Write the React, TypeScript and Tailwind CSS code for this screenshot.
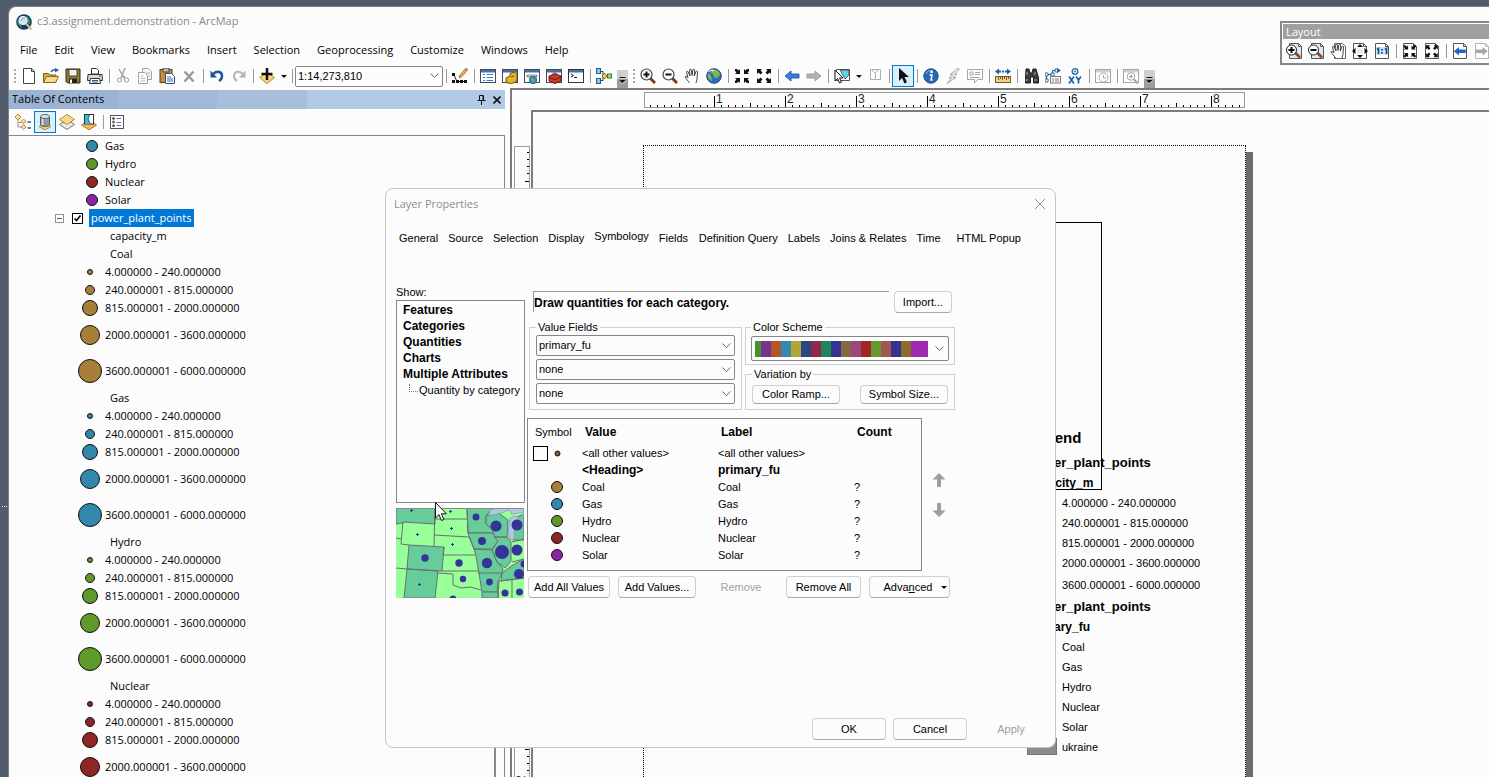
import React, { type ReactNode } from "react";

/* ---------- icon primitives ---------- */

function Icon({ children, size = 16 }: { children: ReactNode; size?: number }) {
  return (
    <svg width={size} height={size} viewBox="0 0 16 16" fill="none" className="shrink-0" aria-hidden="true">
      {children}
    </svg>
  );
}

const PageBase = ({ stroke = "#555555" }: { stroke?: string }) => (
  <path d="M1.500 .5h10l3 3v12h-13z M11.500 .5v3h3" fill="#fff" stroke={stroke} />
);

const WindowBase = ({ bar = "#4a6fa5", stroke = "#3f4a5c" }: { bar?: string; stroke?: string }) => (
  <>
    <rect x=".5" y="1.500" width="15" height="13" fill="#fff" stroke={stroke} />
    <rect x="1" y="2" width="14" height="2.500" fill={bar} />
  </>
);

const inward = "M1 1l2 0 1.500 1.500L6 1v5H1l1.500-1.500L1 3z M15 1v2l-1.500 1.500L15 6h-5V1l1.500 1.500L13 1z M1 15v-2l1.500-1.500L1 10h5v5l-1.500-1.500L3 15z M15 15h-2l-1.500-1.500L10 15v-5h5l-1.500 1.500L15 13z";
const outward = "M1 1h5L4.500 2.500l2 2-2 2-2-2L1 6z M15 1v5l-1.500-1.500-2 2-2-2 2-2L10 1z M1 15v-5l1.500 1.500 2-2 2 2-2 2L6 15z M15 15h-5l1.500-1.500-2-2 2-2 2 2L15 10z";
const leftArrow = "M1 8l6-5v3h8v4H7v3z";
const rightArrow = "M15 8L9 3v3H1v4h8v3z";
const handPath =
  "M5.500 15c-1-2-3.500-4-4.500-6 .5-1 1.500-.8 3 .8L2.500 4c.2-1 1.400-1 1.800 0L6 8 5.500 2c.3-1.200 1.600-1 1.900 0L8 7.500 8.800 1.800c.4-1 1.600-.8 1.800.2l-.3 6L12 3.500c.5-.9 1.600-.5 1.600.5L13 11l-1 4";

const NewIcon = () => (
  <Icon>
    <path d="M2.500 .5h8l3 3v12h-11z M10.500 .5v3h3" fill="#fff" stroke="#444" />
  </Icon>
);
const OpenIcon = () => (
  <Icon>
    <path d="M.5 14.500v-9h5l1.500 1.500h6v7.500z" fill="#d7ab45" stroke="#7a5c1b" />
    <path d="M.5 14.500l3-6h12l-3 6z" fill="#f7dc8e" stroke="#8b6b21" />
    <path d="M8 4c1-2 3-2.500 5-2" stroke="#1c5fa8" strokeWidth="1.500" />
    <path d="M12 0l4 2-4 2.500z" fill="#1c5fa8" />
  </Icon>
);
const SaveIcon = () => (
  <Icon>
    <path d="M1 1h14v14H2.500L1 13.500z" fill="#8a7a35" stroke="#2d2a1c" />
    <path d="M4 1.500h8V8H4z" fill="#f1f1f1" stroke="#4a4630" />
    <path d="M4 10.500h8V15H4z" fill="#222" />
    <path d="M5 11.500h2V15H5z" fill="#fff" />
  </Icon>
);
const PrintIcon = () => (
  <Icon>
    <path d="M4.500 6V.5h5l2 2V6z" fill="#fff" stroke="#333" />
    <path d="M1 6.500h14l.5 6H.5z" fill="#d9d9d2" stroke="#333" />
    <path d="M3.500 10.500h9l1 5h-11z" fill="#fff" stroke="#333" />
    <path d="M5 12.500h6 M5 14h6" stroke="#2b5a98" />
    <rect x="12" y="7.500" width="1.500" height="1.500" fill="#d33" />
  </Icon>
);
const CutIcon = () => (
  <Icon>
    <path d="M4 1l5 9 M10 0L6 10" stroke="#a5a5a5" strokeWidth="1.500" />
    <circle cx="4.500" cy="12" r="2" stroke="#9b9b9b" />
    <circle cx="11.500" cy="12" r="2.200" stroke="#9b9b9b" />
    <path d="M8 8l2 2" stroke="#a5a5a5" strokeWidth="2" />
  </Icon>
);
const CopyIcon = () => (
  <Icon>
    <path d="M5.500 .5h6l3 3v8h-9z" fill="#f4f4f4" stroke="#a2a2a2" />
    <path d="M1.500 4.500h6l3 3v8h-9z" fill="#fff" stroke="#a2a2a2" />
    <path d="M3.500 8h3 M3.500 10.500h5 M3.500 13h5 M9 5h4 M11 8h2" stroke="#b5b5b5" />
  </Icon>
);
const PasteIcon = () => (
  <Icon>
    <rect x="1" y="1.500" width="12" height="13" fill="#c98d3c" stroke="#5a4220" />
    <path d="M4 0h6v4H4z" fill="#bbb" stroke="#444" />
    <path d="M6.500 5.500h6l3 3v7h-9z" fill="#fff" stroke="#35507d" />
    <path d="M8 9h4 M8 11h6 M8 13h6" stroke="#3a6fb5" />
  </Icon>
);
const DeleteIcon = () => (
  <Icon>
    <path d="M3.500 3.500l9 10 M12.500 3.500l-9 10" stroke="#999" strokeWidth="2.500" />
  </Icon>
);
const UndoIcon = () => (
  <Icon>
    <path d="M4 6c5-4 9-2 9 2 0 2-1 4-3 5" stroke="#1d5499" strokeWidth="2.500" />
    <path d="M1.500 2.500v7h6.500z" fill="#1d5499" />
  </Icon>
);
const RedoIcon = () => (
  <Icon>
    <path d="M12 6C7 2 3 4 3 8c0 2 1 4 3 5" stroke="#b4b4b4" strokeWidth="2" />
    <path d="M14.500 2.500v7H8z" fill="#b4b4b4" />
  </Icon>
);
const AddDataIcon = () => (
  <Icon>
    <path d="M8 4.500l7.500 5L8 15.500.5 9.500z" fill="#f6d77d" stroke="#b38a35" />
    <path d="M8 0v12 M2.500 6h11" stroke="#111" strokeWidth="2.500" />
  </Icon>
);
const EditorIcon = () => (
  <Icon>
    <path d="M1.500 6L5 13.500h9" stroke="#222" />
    <path d="M0 5h3v3H0z M0 12h3v3H0z M4 12h3v3H4z M8 12h3v3H8z M12 12h3v3h-3z" fill="#111" />
    <path d="M7 10l1-3 5.500-6.500L15.500 2 10 8.500z" fill="#e8b23e" stroke="#7e5b1c" strokeWidth=".7" />
    <path d="M13 1l1-1 2 1.500-1 1z" fill="#d9534f" />
  </Icon>
);
const TableWinIcon = () => (
  <Icon>
    <WindowBase />
    <path d="M3 6.500h2 M3 9.500h2 M3 12.500h2 M6.500 6.500H13 M6.500 9.500H13 M6.500 12.500H13" stroke="#2d7dc8" />
  </Icon>
);
const CatalogIcon = () => (
  <Icon>
    <WindowBase />
    <path d="M4 14V10l4-2V5.500l4-1.500 3 1.500V13l-6 3z" fill="#e6b422" stroke="#6f5511" />
    <path d="M9 9l3-1" stroke="#6f5511" />
  </Icon>
);
const SearchWinIcon = () => (
  <Icon>
    <WindowBase />
    <path d="M3 7h10v2H3z" fill="#d9d9d9" stroke="#666" strokeWidth=".7" />
    <circle cx="9" cy="12" r="3.700" fill="#3b8ccc" stroke="#2b5d7f" strokeWidth=".8" />
    <path d="M7 11c2-2 3 0 4 1l-2 3z" fill="#6cb04c" />
  </Icon>
);
const ToolboxIcon = () => (
  <Icon>
    <WindowBase />
    <path d="M3 8l7-2 5 2v5l-6 2.500L3 13z" fill="#cf3a2b" stroke="#701a12" />
    <path d="M3 9.500l6 2 6-2.500 M6 7c0-2 4-3 5-.5" stroke="#701a12" />
  </Icon>
);
const PythonIcon = () => (
  <Icon>
    <WindowBase stroke="#333" />
    <path d="M3 6l2.500 1.500L3 9" stroke="#111" />
    <path d="M6 9.500h3" stroke="#111" />
  </Icon>
);
const ModelIcon = () => (
  <Icon>
    <path d="M5 3.500h2v9H5 M7 8h4" stroke="#333" />
    <rect x=".5" y=".5" width="4" height="5" fill="#8ec5f2" stroke="#205c9c" />
    <rect x=".5" y="10.500" width="4" height="5" fill="#8ec5f2" stroke="#205c9c" />
    <path d="M6 8l2.500-3L11 8l-2.500 3z" fill="#f5cf56" stroke="#93701a" />
    <rect x="11.500" y="6" width="4" height="4" fill="#a5d87b" stroke="#3d7a22" />
  </Icon>
);
const ZoomGlass = ({ minus = false }: { minus?: boolean }) => (
  <Icon>
    <path d="M10 10l5 5" stroke="#7b3f20" strokeWidth="3" />
    <circle cx="6.500" cy="6.500" r="5.500" fill="#fff" stroke="#444" strokeWidth="1.200" />
    <path d={minus ? "M3.500 6.500h6" : "M3.500 6.500h6 M6.500 3.500v6"} stroke="#111" strokeWidth="2" />
  </Icon>
);
const HandIcon = () => (
  <Icon>
    <path d={handPath} fill="#fff" stroke="#333" strokeWidth=".9" />
  </Icon>
);
const GlobeIcon = () => (
  <Icon>
    <circle cx="8" cy="8" r="7.300" fill="#2f6fc0" stroke="#24446e" />
    <path d="M7 2c4-1 7 2 7 5l-3 3-3-1-1-3-2-1z M2 5l3 3 1 5C3 12 1 9 2 5z" fill="#7fb84a" />
    <path d="M3 4c1-2 4-2 5-1" stroke="#d4e8fb" strokeWidth="1.500" />
  </Icon>
);
const ArrowsInIcon = () => (
  <Icon>
    <path d={inward} fill="#111" />
  </Icon>
);
const ArrowsOutIcon = () => (
  <Icon>
    <path d={outward} fill="#111" />
  </Icon>
);
const BackIcon = () => (
  <Icon>
    <path d={leftArrow} fill="#3b7dd8" stroke="#1b4a92" strokeWidth=".8" />
  </Icon>
);
const ForwardIcon = () => (
  <Icon>
    <path d={rightArrow} fill="#b3b3b3" stroke="#8f8f8f" strokeWidth=".8" />
  </Icon>
);
const SelectFeatIcon = () => (
  <Icon>
    <path d="M2.500 1.500h13v11h-13z" fill="#fff" stroke="#555" />
    <path d="M6 2h9v5l-4 4z" fill="#58d3ee" stroke="#333" strokeWidth=".7" />
    <path d="M1 2v11l2.500-2.500L5.500 15l2-1-2-4H9z" fill="#fff" stroke="#111" />
  </Icon>
);
const ClearSelIcon = () => (
  <Icon>
    <path d="M3.500 1.500h10v10h-10z M5 2l3 3 3-3 M8.500 5v6" stroke="#b0b0b0" />
  </Icon>
);
const PointerIcon = () => (
  <Icon>
    <path d="M4 0v13l3-3 2.500 5.500 2.500-1.200L9.500 9H14z" fill="#111" />
  </Icon>
);
const InfoIcon = () => (
  <Icon>
    <circle cx="8" cy="8" r="7.200" fill="#2468b8" stroke="#174a88" />
    <path d="M3 6c1-3 4-4 7-3" stroke="#8fbbe8" />
    <circle cx="8.500" cy="4" r="1.300" fill="#fff" />
    <path d="M6.500 7h2.500l-1 5h1.500" stroke="#fff" strokeWidth="1.500" />
  </Icon>
);
const LightningIcon = () => (
  <Icon>
    <path d="M12.500 .5L5 6.500h3L4 10h2.500L2 15.500l9-6H8L12 6H9.500l5-5z" fill="#eee" stroke="#aaa" />
  </Icon>
);
const PopupIcon = () => (
  <Icon>
    <path d="M.5 1.500h15v10h-5l-3 3.500v-3.500h-7z" fill="#fff" stroke="#a5a5a5" />
    <path d="M3 4h3v3H3z M8 4.500h5 M8 6.500h5 M3 9.500H13" stroke="#a5a5a5" />
  </Icon>
);
const MeasureIcon = () => (
  <Icon>
    <path d="M0 3.500l4-3v2h2v2H4v2z M16 3.500l-4-3v2h-2v2h2v2z M7 2.500h2v2H7z" fill="#1f5fb0" />
    <rect x=".5" y="8.500" width="15" height="6" fill="#efd28a" stroke="#7a5a22" />
    <path d="M3.500 9v3 M5.500 9v2 M7.500 9v3 M9.500 9v2 M11.500 9v3 M13.500 9v2" stroke="#7a5a22" />
  </Icon>
);
const BinocularsIcon = () => (
  <Icon>
    <path d="M3 1h3l1 4h2l1-4h3l2.500 9v5h-5V9h-3v6h-5v-5z" fill="#3a3d40" stroke="#1e1e1e" />
    <path d="M2 12h3 M11 12h3 M4 4v3 M12 4v3" stroke="#a5abb0" />
  </Icon>
);
const RouteIcon = () => (
  <Icon>
    <path d="M1.500 13V6.500h6V2.500h4" stroke="#1f5fa0" />
    <path d="M0 11h3v3H0z M0 5h3v3H0z M6 5h3v3H6z M10 1h3v3h-3z" fill="#fff" stroke="#1f5fa0" strokeWidth=".9" />
    <path d="M12 0l4 2.500L12 5z" fill="#1f5fa0" />
    <rect x="5.500" y="8.500" width="10" height="6.500" fill="#fff" stroke="#777" />
    <path d="M7 11h2 M10 11h4 M7 13h2 M10 13h4" stroke="#777" />
  </Icon>
);
const XYIcon = () => (
  <Icon>
    <circle cx="8" cy="3.500" r="2.800" stroke="#1d64a8" strokeWidth="1.300" />
    <circle cx="8" cy="3.500" r="1" fill="#1d64a8" />
    <path d="M2 8.500l5 7 M7 8.500l-5 7 M9 8.500l2.500 3.500L14 8.500 M11.500 12v3.500" stroke="#1d64a8" strokeWidth="1.700" />
  </Icon>
);
const TimeIcon = () => (
  <Icon>
    <WindowBase bar="#cfcfcf" stroke="#a5a5a5" />
    <circle cx="8.500" cy="9.500" r="4.500" fill="#fff" stroke="#a5a5a5" />
    <path d="M8.500 7v3h2.500" stroke="#a5a5a5" />
  </Icon>
);
const ViewerIcon = () => (
  <Icon>
    <WindowBase bar="#cfcfcf" stroke="#a5a5a5" />
    <circle cx="8" cy="8.500" r="3.800" fill="#fff" stroke="#a5a5a5" />
    <path d="M6 8.500h4 M8 6.500v4" stroke="#999" />
    <path d="M11 11.500l4 4" stroke="#a5a5a5" strokeWidth="2" />
  </Icon>
);

const PageZoomIcon = ({ minus = false }: { minus?: boolean }) => (
  <Icon>
    <path d="M3.500 .5h9l3 3v12h-12z M12.500 .5v3h3" fill="#dcebf8" stroke="#555" />
    <path d="M9 9.500l5 5" stroke="#8a4a28" strokeWidth="2.800" />
    <circle cx="5.500" cy="7" r="5" fill="#fff" stroke="#222" />
    <path d={minus ? "M2.500 7h6" : "M2.500 7h6 M5.500 4v6"} stroke="#111" strokeWidth="2" />
  </Icon>
);
const PageHandIcon = () => (
  <Icon>
    <path d="M4.500 .5h8l3 3v12h-11z" fill="#fff" stroke="#666" />
    <path d={handPath} fill="#fff" stroke="#333" strokeWidth=".9" />
  </Icon>
);
const PageFullIcon = () => (
  <Icon>
    <PageBase />
    <rect x="5" y="5.500" width="6" height="5" fill="#dcebf8" />
    <path d="M8 1l3 3H5z M8 15l3-3H5z M0 8l3.500-3v6z M16 8l-3.500-3v6z" fill="#111" />
  </Icon>
);
const PageOneIcon = () => (
  <Icon>
    <PageBase />
    <rect x="2" y="4" width="12" height="8" fill="#cfe4f6" />
    <path d="M3 6.500l1.500-1V11 M11 6.500l1.500-1V11" stroke="#18508c" strokeWidth="1.700" />
    <path d="M7 6h2v1.500H7z M7 9h2v1.500H7z" fill="#18508c" />
  </Icon>
);
const PageArrows = ({ d, fill = "#111", stroke }: { d: string; fill?: string; stroke?: string }) => (
  <Icon>
    <PageBase stroke={stroke} />
    <path d={d} fill={fill} transform="translate(1 1.500) scale(.85)" />
  </Icon>
);

const AppLogo = () => (
  <Icon>
    <circle cx="8" cy="8" r="7.800" fill="#173d66" />
    <path d="M10 2c3 1 5 4 4 8l-3-1-2-4z M1 7l3 2 2 5C3 13 1 10 1 7z" fill="#2f8f6b" />
    <circle cx="7" cy="6.500" r="4" fill="#cfe6f7" stroke="#eaf3fa" strokeWidth="1.200" />
    <path d="M5 7c1-3 3-3 4-2" stroke="#5b9bd0" />
    <path d="M10 9.500l5.500 6" stroke="#d9b98a" strokeWidth="2" />
  </Icon>
);

/* table-of-contents icons */
const DrawOrderIcon = () => (
  <Icon>
    <path d="M3 5v8h4 M3 8.500h4" stroke="#999" />
    <path d="M3 0l3 3-3 3-3-3z M8.500 5l2.500 2.500L8.500 10 6 7.500z M8.500 10.500L11 13l-2.500 2.500L6 13z" fill="#f8dc98" stroke="#c08c3c" />
    <path d="M12.500 8H16 M12.500 14H16" stroke="#2e5da0" strokeWidth="1.500" />
  </Icon>
);
const SourceIcon = () => (
  <Icon>
    <path d="M8 9l6 3.500L8 16l-6-3.500z" fill="#f6cf6b" stroke="#b38a35" />
    <path d="M3.500 2.500v8c0 2.500 9 2.500 9 0v-8z" fill="#8f9aa8" stroke="#4f5864" />
    <ellipse cx="8" cy="2.500" rx="4.500" ry="2" fill="#dfe5eb" stroke="#5f6874" />
    <path d="M5.500 5v6" stroke="#e7ecf1" strokeWidth="1.500" />
  </Icon>
);
const VisibilityIcon = () => (
  <Icon>
    <path d="M8 5.500l7.500 5L8 15.500.5 10.500z" fill="#e7e7e7" stroke="#777" />
    <path d="M8 .5l7.500 5L8 10.500.5 5.500z" fill="#f9d88a" stroke="#b38a35" />
  </Icon>
);
const BySelectionIcon = () => (
  <Icon>
    <path d="M8 6.500l7.500 4.500L8 15.800.5 11z" fill="#f6b95a" stroke="#b0772a" />
    <rect x="3.500" y=".5" width="9" height="9.500" fill="#fff" stroke="#333" />
    <path d="M4 1h4.500L7 5l2 4.500H4z" fill="#26c3de" />
    <path d="M8.500 1L7 5l2 4.500" stroke="#333" strokeWidth=".8" />
  </Icon>
);
const OptionsIcon = () => (
  <Icon>
    <rect x="1.500" y="1.500" width="13" height="13" fill="#fff" stroke="#555" />
    <circle cx="4.500" cy="4.500" r="1.200" fill="#333" />
    <circle cx="4.500" cy="8" r="1" stroke="#333" />
    <circle cx="4.500" cy="11.700" r="1.200" fill="#333" />
    <path d="M7.500 4.500H12 M7.500 8.500H12 M7.500 11.500H12" stroke="#5574a8" />
  </Icon>
);

const Chevron = () => (
  <svg width="9" height="6" viewBox="0 0 9 6" fill="none" className="pointer-events-none shrink-0" aria-hidden="true">
    <path d="M.5 .5l4 4 4-4" stroke="#666" />
  </svg>
);

/* ---------- toolbars ---------- */

function ToolButton({ label, active = false, children }: { label: string; active?: boolean; children: ReactNode }) {
  return (
    <button
      type="button"
      aria-label={label}
      className={
        active
          ? "flex h-[22px] w-[22px] shrink-0 items-center justify-center border border-[#0078d7] bg-[#d9f1fb]"
          : "flex h-[22px] w-[22px] shrink-0 items-center justify-center"
      }
    >
      {children}
    </button>
  );
}

const Sep = () => (
  <span className="flex w-[6px] shrink-0 justify-center">
    <span className="h-[14px] w-px bg-[#9a9a9a]" />
  </span>
);

const Grip = () => (
  <span className="flex w-1 shrink-0 flex-col gap-[2px]">
    {[0, 1, 2, 3].map((i) => (
      <span key={i} className="h-[2px] w-[2px] bg-[#aaaaaa]" />
    ))}
  </span>
);

const DropArrow = ({ label }: { label: string }) => (
  <button type="button" aria-label={label} className="flex h-[22px] w-[11px] shrink-0 items-center justify-center">
    <svg width="6" height="3" viewBox="0 0 6 3" aria-hidden="true">
      <path d="M0 0h6L3 3z" fill="#111" />
    </svg>
  </button>
);

const Overflow = () => (
  <button
    type="button"
    aria-label="Toolbar options"
    className="ml-[2px] flex h-[18px] w-[11px] shrink-0 flex-col justify-end self-end bg-linear-to-b from-[#cfcfcf] from-50% to-[#9c9c9c] to-50% pb-1"
  >
    <svg width="11" height="7" viewBox="0 0 11 7" aria-hidden="true">
      <path d="M2.500 .5h6" stroke="#111" />
      <path d="M2.500 3h6l-3 3.500z" fill="#111" />
      <path d="M3 7.500L9 4" stroke="#fff" strokeWidth=".6" />
    </svg>
  </button>
);

const menus = ["File", "Edit", "View", "Bookmarks", "Insert", "Selection", "Geoprocessing", "Customize", "Windows", "Help"];

function MainToolbar() {
  return (
    <div role="toolbar" aria-label="Standard and tools" className="flex h-6 shrink-0 items-center pl-[5px]">
      <Grip />
      <ToolButton label="New"><NewIcon /></ToolButton>
      <ToolButton label="Open"><OpenIcon /></ToolButton>
      <ToolButton label="Save"><SaveIcon /></ToolButton>
      <ToolButton label="Print"><PrintIcon /></ToolButton>
      <Sep />
      <ToolButton label="Cut"><CutIcon /></ToolButton>
      <ToolButton label="Copy"><CopyIcon /></ToolButton>
      <ToolButton label="Paste"><PasteIcon /></ToolButton>
      <ToolButton label="Delete"><DeleteIcon /></ToolButton>
      <Sep />
      <ToolButton label="Undo"><UndoIcon /></ToolButton>
      <ToolButton label="Redo"><RedoIcon /></ToolButton>
      <Sep />
      <ToolButton label="Add data"><AddDataIcon /></ToolButton>
      <DropArrow label="Add data menu" />
      <Sep />
      <div className="relative flex w-[148px] shrink-0 items-center">
        <select
          aria-label="Map scale"
          className="h-[21px] w-full appearance-none rounded-xs border border-[#868686] bg-[#fcfcfc] pl-[2px] font-['Liberation_Sans',sans-serif] text-[11px] text-black"
        >
          <option>1:14,273,810</option>
        </select>
        <span className="pointer-events-none absolute right-1"><Chevron /></span>
      </div>
      <Sep />
      <ToolButton label="Editor"><EditorIcon /></ToolButton>
      <Sep />
      <ToolButton label="Contents window"><TableWinIcon /></ToolButton>
      <ToolButton label="Catalog window"><CatalogIcon /></ToolButton>
      <ToolButton label="Search window"><SearchWinIcon /></ToolButton>
      <ToolButton label="Toolbox"><ToolboxIcon /></ToolButton>
      <ToolButton label="Python window"><PythonIcon /></ToolButton>
      <Sep />
      <ToolButton label="Model builder"><ModelIcon /></ToolButton>
      <Overflow />
      <span className="w-[5px] shrink-0" />
      <Grip />
      <ToolButton label="Zoom in"><ZoomGlass /></ToolButton>
      <ToolButton label="Zoom out"><ZoomGlass minus /></ToolButton>
      <ToolButton label="Pan"><HandIcon /></ToolButton>
      <ToolButton label="Full extent"><GlobeIcon /></ToolButton>
      <Sep />
      <ToolButton label="Fixed zoom in"><ArrowsInIcon /></ToolButton>
      <ToolButton label="Fixed zoom out"><ArrowsOutIcon /></ToolButton>
      <Sep />
      <ToolButton label="Previous extent"><BackIcon /></ToolButton>
      <ToolButton label="Next extent"><ForwardIcon /></ToolButton>
      <Sep />
      <ToolButton label="Select features"><SelectFeatIcon /></ToolButton>
      <DropArrow label="Select features menu" />
      <ToolButton label="Clear selection"><ClearSelIcon /></ToolButton>
      <Sep />
      <ToolButton label="Select elements" active><PointerIcon /></ToolButton>
      <Sep />
      <ToolButton label="Identify"><InfoIcon /></ToolButton>
      <ToolButton label="Hyperlink"><LightningIcon /></ToolButton>
      <ToolButton label="Popup"><PopupIcon /></ToolButton>
      <Sep />
      <ToolButton label="Measure"><MeasureIcon /></ToolButton>
      <Sep />
      <ToolButton label="Find"><BinocularsIcon /></ToolButton>
      <ToolButton label="Find route"><RouteIcon /></ToolButton>
      <ToolButton label="Go to XY"><XYIcon /></ToolButton>
      <Sep />
      <ToolButton label="Time slider"><TimeIcon /></ToolButton>
      <Sep />
      <ToolButton label="Viewer window"><ViewerIcon /></ToolButton>
      <Overflow />
    </div>
  );
}

function LayoutToolbar() {
  return (
    <section
      aria-label="Layout toolbar"
      className="absolute top-[21px] right-0 w-[209px] overflow-hidden border-2 border-r-0 border-[#84878d] bg-[#fcfcfc] pt-px pb-px pl-px"
    >
      <h2 className="h-[15px] bg-[#a0a0a0] pl-[3px] text-[11px] leading-[15px] text-white">Layout</h2>
      <div className="mt-px flex h-[22px] items-center">
        <ToolButton label="Layout zoom in"><PageZoomIcon /></ToolButton>
        <ToolButton label="Layout zoom out"><PageZoomIcon minus /></ToolButton>
        <ToolButton label="Layout pan"><PageHandIcon /></ToolButton>
        <ToolButton label="Whole page"><PageFullIcon /></ToolButton>
        <ToolButton label="Actual size"><PageOneIcon /></ToolButton>
        <Sep />
        <ToolButton label="Layout fixed zoom in"><PageArrows d={inward} /></ToolButton>
        <ToolButton label="Layout fixed zoom out"><PageArrows d={outward} /></ToolButton>
        <Sep />
        <ToolButton label="Layout previous extent"><PageArrows d={leftArrow} fill="#2567c4" /></ToolButton>
        <ToolButton label="Layout next extent"><PageArrows d={rightArrow} fill="#a5a5a5" stroke="#b5b5b5" /></ToolButton>
      </div>
    </section>
  );
}

/* ---------- table of contents ---------- */

const fuels = [
  { name: "Coal", color: "#a87f39" },
  { name: "Gas", color: "#3288aa" },
  { name: "Hydro", color: "#5f9929" },
  { name: "Nuclear", color: "#8f2626" },
  { name: "Solar", color: "#8e22a5" },
];

const classes = [
  { label: "4.000000 - 240.000000", r: 3, tall: false },
  { label: "240.000001 - 815.000000", r: 5, tall: false },
  { label: "815.000001 - 2000.000000", r: 8, tall: false },
  { label: "2000.000001 - 3600.000000", r: 10, tall: true },
  { label: "3600.000001 - 6000.000000", r: 12, tall: true },
];

const Dot = ({ r, color }: { r: number; color: string }) => (
  <svg width="26" height="26" viewBox="-13 -13 26 26" className="shrink-0" aria-hidden="true">
    <circle r={r - 0.5} fill={color} stroke="#111" />
  </svg>
);

function TableOfContents() {
  return (
    <aside className="flex w-[496px] shrink-0 flex-col pt-[2px]">
      <header className="flex h-[19px] items-center bg-[linear-gradient(to_right,#9ab3d3_22%,#a2b8d8_22%_42%,#a7bfda_42%_60%,#b0cae5_60%)] pl-[3px]">
        <h2 className="flex-1 text-[11px] text-black">Table Of Contents</h2>
        <button type="button" aria-label="Auto hide" className="flex h-4 w-4 items-center justify-center">
          <svg width="9" height="10" viewBox="0 0 9 10" fill="none" aria-hidden="true">
            <path d="M2.500 .5h4v5h-4z M.5 5.500h8 M4.500 6v4 M6 1v4" stroke="#111" />
          </svg>
        </button>
        <button type="button" aria-label="Close table of contents" className="flex h-4 w-4 items-center justify-center">
          <svg width="8" height="8" viewBox="0 0 8 8" aria-hidden="true">
            <path d="M.5 .5l7 7 M7.500 .5l-7 7" stroke="#111" strokeWidth="1.600" />
          </svg>
        </button>
      </header>
      <div className="flex h-[26px] shrink-0 items-center pl-[3px]">
        <ToolButton label="List by drawing order"><DrawOrderIcon /></ToolButton>
        <ToolButton label="List by source" active><SourceIcon /></ToolButton>
        <ToolButton label="List by visibility"><VisibilityIcon /></ToolButton>
        <ToolButton label="List by selection"><BySelectionIcon /></ToolButton>
        <Sep />
        <ToolButton label="Options"><OptionsIcon /></ToolButton>
      </div>
      <div className="flex min-h-0 flex-1 border-t border-r border-[#868686]">
        <div className="min-h-0 flex-1 overflow-hidden pt-px text-[11px] text-black">
          <ul>
            {fuels.slice(1).map((f) => (
              <li key={f.name} className="flex h-[18px] items-center pl-[70px]">
                <Dot r={6} color={f.color} />
                {f.name}
              </li>
            ))}
          </ul>
          <div className="flex h-[18px] items-center pl-[46px]">
            <button type="button" aria-label="Collapse layer" className="flex h-[9px] w-[9px] items-center justify-center border border-[#919191]">
              <span className="h-px w-[5px] bg-[#3b5a9a]" />
            </button>
            <label className="ml-2 flex items-center gap-[6px]">
              <span className="grid h-[11px] w-[11px] place-items-center">
                <input type="checkbox" defaultChecked className="peer col-start-1 row-start-1 h-[11px] w-[11px] appearance-none border border-black bg-white" />
                <svg width="9" height="9" viewBox="0 0 9 9" fill="none" className="pointer-events-none col-start-1 row-start-1" aria-hidden="true">
                  <path d="M1.500 4.500l2 2 4-5" stroke="#000" strokeWidth="1.600" />
                </svg>
              </span>
              <span className="h-[18px] bg-[#0078d7] px-[2px] leading-[18px] text-white">power_plant_points</span>
            </label>
          </div>
          <p className="h-[18px] pl-[101px] leading-[18px]">capacity_m</p>
          {fuels.slice(0, 4).map((f) => (
            <section key={f.name}>
              <h3 className="h-[18px] pl-[101px] leading-[18px]">{f.name}</h3>
              <ul>
                {classes.map((c) => (
                  <li key={c.label} className={c.tall ? "flex h-[36px] items-center gap-[2px] pl-[68px]" : "flex h-[18px] items-center gap-[2px] pl-[68px]"}>
                    <Dot r={c.r} color={f.color} />
                    {c.label}
                  </li>
                ))}
              </ul>
            </section>
          ))}
        </div>
        <div className="flex w-[10px] shrink-0 items-end">
          <span className="h-1/2 w-[2px] bg-[#86898d]" />
        </div>
      </div>
    </aside>
  );
}

/* ---------- layout view ---------- */

const INCH = 71;

function HorizontalRuler() {
  const ticks = Array.from({ length: 84 }, (_, i) => i + 1);
  return (
    <svg width="601" height="16" viewBox="0 0 601 16" aria-label="Horizontal ruler" className="shrink-0">
      <rect x=".5" y=".5" width="600" height="15" fill="#fcfcfc" stroke="#9a9a9a" />
      {ticks.map((i) => (
        <rect key={i} x={Math.round((i * INCH) / 10) - 1} y={i % 10 === 0 ? 4 : i % 5 === 0 ? 11 : 13} width="1" height={i % 10 === 0 ? 11 : i % 5 === 0 ? 4 : 2} fill="#000" />
      ))}
      {[1, 2, 3, 4, 5, 6, 7, 8].map((n) => (
        <text key={n} x={n * INCH + 1} y="11" fontSize="12" className="font-['Liberation_Sans',sans-serif]" fill="#222">
          {n}
        </text>
      ))}
    </svg>
  );
}

function VerticalRuler() {
  const ticks = Array.from({ length: 109 }, (_, i) => i + 1);
  return (
    <svg width="17" height="782" viewBox="0 0 17 782" aria-label="Vertical ruler" className="shrink-0">
      <rect x=".5" y=".5" width="15" height="781" fill="#fcfcfc" stroke="#9a9a9a" />
      {ticks.map((i) => (
        <rect key={i} x={i % 10 === 0 ? 4 : i % 5 === 0 ? 11 : 13} y={Math.round((i * INCH) / 10) - 1} width={i % 10 === 0 ? 11 : i % 5 === 0 ? 4 : 2} height="1" fill="#000" />
      ))}
      {[1, 2, 3, 4, 5, 6, 7, 8, 9, 10].map((n) => (
        <text key={n} transform={`translate(11 ${n * INCH - 3}) rotate(-90)`} fontSize="12" className="font-['Liberation_Sans',sans-serif]" fill="#222">
          {11 - n}
        </text>
      ))}
    </svg>
  );
}

function PageLegend() {
  return (
    <div className="absolute top-[280px] left-[384px] font-['Liberation_Sans',sans-serif] text-[11px] whitespace-nowrap text-black">
      <h2 className="h-[27px] text-[15px] leading-6 font-bold">Legend</h2>
      <h3 className="h-5 text-[13px] leading-5 font-bold">power_plant_points</h3>
      <h4 className="h-5 text-[12px] leading-5 font-bold">capacity_m</h4>
      <ul className="pl-[34px] leading-5">
        {classes.slice(0, 4).map((c) => (
          <li key={c.label}>{c.label}</li>
        ))}
        <li className="leading-6">{classes[4].label}</li>
      </ul>
      <h3 className="h-5 text-[13px] leading-5 font-bold">power_plant_points</h3>
      <h4 className="h-5 text-[12px] leading-5 font-bold">primary_fu</h4>
      <ul className="pl-[34px] leading-5">
        {[...fuels.map((f) => f.name), "ukraine"].map((n) => (
          <li key={n}>{n}</li>
        ))}
      </ul>
    </div>
  );
}

function LayoutView() {
  return (
    <main className="ml-[5px] flex min-w-0 flex-1 flex-col overflow-hidden border-t-2 border-l-2 border-[#7b7b7b]">
      <div className="flex h-5 shrink-0 items-center pl-[132px]">
        <HorizontalRuler />
      </div>
      <div className="flex min-h-0 flex-1">
        <div className="w-[19px] shrink-0 overflow-hidden pt-9 pl-[2px]">
          <VerticalRuler />
        </div>
        <div className="relative flex-1 overflow-hidden border-t-2 border-l-2 border-[#7b7b7b]">
          <div className="absolute top-[33px] left-[110px] h-[782px] w-[603px] border border-dotted border-black bg-[#fcfcfc] shadow-[7px_7px_0_#6d6d6d]">
            <div className="absolute top-[76px] left-[30px] h-[268px] w-[428px] border border-black" />
            <PageLegend />
            <div className="absolute top-[592px] left-[383px] h-[17px] w-[30px] border border-[#777] bg-[#8a8c90]" />
          </div>
        </div>
      </div>
    </main>
  );
}

/* ---------- layer properties dialog ---------- */

const tabs = ["General", "Source", "Selection", "Display", "Symbology", "Fields", "Definition Query", "Labels", "Joins & Relates", "Time", "HTML Popup"];

const ramp = [
  "#41952a", "#773290", "#b2562b", "#3389ae", "#b4a337", "#2a4783", "#922849", "#24835e", "#343292",
  "#84683f", "#9b487c", "#a42529", "#639a2b", "#a0574f", "#343292", "#8b6d2b", "#9f29b0",
];

function PreviewMap() {
  const dots: [number, number, number][] = [
    [80, 9, 3.5], [100, 18, 5.5], [121, 17, 5.5], [86, 33, 4], [106, 44, 7], [121, 42, 5.5], [91, 55, 5.2],
    [29, 50, 3.7], [63, 55, 3.7], [67, 71, 3.2], [93.5, 74, 3.4], [123, 66, 5], [128, 56, 3.5], [109, 85, 3.5],
    [123.5, 84, 3.5], [57, 91, 3.5],
  ];
  const small: [number, number][] = [[15, 2], [54, 3], [55, 20], [21, 26], [56, 36], [23, 76]];
  return (
    <svg width="128" height="90" viewBox="0 0 128 90" role="img" aria-label="Preview map" className="mt-[5px] block">
      <rect width="128" height="90" fill="#99ff99" />
      <g stroke="#6b6f72" strokeWidth="1" fill="#66cc99">
        <path d="M0 0H39V16L7 14v1L0 16z" />
        <path d="M13 37l35 2-2 24-35-2z M11 61l31 2-3 27H8z" />
        <path d="M71 0H97L90 8v8l6 5 2 4H72z" />
        <path d="M72 25h25l5 8-6 8H78z M78 41l18 1 5 12 6 7-1 5H83L80 48z" />
        <path d="M83 65h23l-4 8-1 11H86z" />
        <path d="M90 8l11-4 11 8-1 17H99l-3-8-6-5z M98 29h13l4 5v19l-6 7-8-6-5-12 6-9z" />
        <path d="M118 10l10-4v26h-11z M106 65l8-6 8-5 6-3v19l-23 3z M86 84h16v6H86z" />
      </g>
      <path d="M94 2l6-2h28v4l-12 2-3-4-8 3-12 3z M114 10l5-2 4 1-4 5-1 18-4-1-2-6z M126 6l2 0v4z" fill="#b0c8e8" stroke="#7c8ca0" strokeWidth=".6" />
      <g stroke="#6b6f72" fill="none">
        <path d="M39 0L38 38 M38 11h34 M38 27l35 2 5 12 M5 36l8 1 M7 14l-2 22 M0 30l5 1 M48 39l-1 8h32 M46 63h37 M42 65l15 1v11l8 3 9-1 11 3 M0 60l11 1 M116 34l12-3 M116 54l12-3 M103 73l-1 17 M116 72v18 M103 73l25-3 M71 0l1 25" />
      </g>
      <g fill="#333399">
        {dots.map(([x, y, r]) => (
          <circle key={`${x}-${y}`} cx={x} cy={y} r={r} />
        ))}
      </g>
      <g stroke="#333399">
        {small.map(([x, y]) => (
          <path key={`${x}-${y}`} d={`M${x - 1} ${y + 0.5}h3 M${x + 0.5} ${y - 1}v3`} />
        ))}
      </g>
      <path d="M0 .5h128" stroke="#8a8a8a" />
    </svg>
  );
}

function PushButton({ children, className, disabled = false }: { children: ReactNode; className: string; disabled?: boolean }) {
  return (
    <button
      type="button"
      disabled={disabled}
      className={`flex items-center justify-center rounded border whitespace-nowrap ${disabled ? "border-transparent text-[#a0a0a0]" : "border-[#cfcfcf] border-b-[#a8a8a8] text-black"} ${className}`}
    >
      {children}
    </button>
  );
}

function FieldSelect({ label, value }: { label: string; value: string }) {
  return (
    <div className="relative flex items-center">
      <select aria-label={label} defaultValue={value} className="h-[21px] w-full appearance-none rounded-xs border border-[#868686] bg-[#fcfcfc] pl-[2px] text-[11px] text-black">
        <option>{value}</option>
      </select>
      <span className="pointer-events-none absolute right-1"><Chevron /></span>
    </div>
  );
}

function Group({ title, className, children }: { title: string; className: string; children: ReactNode }) {
  return (
    <fieldset className={`min-w-0 border border-[#cfcfcf] ${className}`}>
      <legend className="px-[2px] leading-3">{title}</legend>
      {children}
    </fieldset>
  );
}

function SymbolTable() {
  return (
    <div className="h-[153px] w-[395px] shrink-0 border border-[#868686] pt-1">
      <table className="w-full table-fixed border-collapse text-left">
        <colgroup>
          <col className="w-[54px]" />
          <col className="w-[136px]" />
          <col className="w-[136px]" />
          <col />
        </colgroup>
        <thead>
          <tr className="h-[18px]">
            <th className="pl-[7px] font-normal">Symbol</th>
            <th className="pl-[3px] text-[12px]">Value</th>
            <th className="pl-[3px] text-[12px]">Label</th>
            <th className="pl-[3px] text-[12px]">Count</th>
          </tr>
        </thead>
        <tbody>
          <tr className="h-[21px]">
            <td className="pt-1">
              <div className="flex items-center pl-[5px]">
                <input type="checkbox" aria-label="Draw all other values" className="h-[15px] w-[15px] appearance-none border border-black" />
                <svg width="19" height="9" viewBox="-9 -4 19 9" aria-hidden="true">
                  <circle cx=".5" cy=".5" r="2.500" fill="#8a5a22" stroke="#111" />
                </svg>
              </div>
            </td>
            <td className="pt-1">&lt;all other values&gt;</td>
            <td className="pt-1">&lt;all other values&gt;</td>
            <td />
          </tr>
          <tr className="h-[17px] text-[12px] leading-[17px] font-bold">
            <td />
            <td>&lt;Heading&gt;</td>
            <td>primary_fu</td>
            <td />
          </tr>
          {fuels.map((f) => (
            <tr key={f.name} className="h-[17px] leading-[17px]">
              <td>
                <svg width="13" height="13" viewBox="0 0 13 13" className="ml-[23px] block" aria-hidden="true">
                  <circle cx="6" cy="6" r="5.500" fill={f.color} stroke="#111" />
                </svg>
              </td>
              <td>{f.name}</td>
              <td>{f.name}</td>
              <td>?</td>
            </tr>
          ))}
        </tbody>
      </table>
    </div>
  );
}

function LayerProperties() {
  return (
    <section
      role="dialog"
      aria-label="Layer Properties"
      className="absolute top-[188px] left-[385px] flex h-[560px] w-[671px] flex-col rounded-lg border border-[#c6c6c6] bg-[#fcfcfc] font-['Liberation_Sans',sans-serif] text-[11px] text-black"
    >
      <header className="flex h-[30px] items-center justify-between pr-[10px] pl-2">
        <h2 className="font-['Open_Sans',sans-serif] text-[11px] text-[#8c8c8c]">Layer Properties</h2>
        <button type="button" aria-label="Close">
          <svg width="10" height="10" viewBox="0 0 10 10" fill="none" aria-hidden="true">
            <path d="M0 0l10 10 M10 0L0 10" stroke="#8a8a8a" />
          </svg>
        </button>
      </header>
      <div role="tablist" className="mt-2 flex h-[22px] items-center pl-2">
        {tabs.map((t) => (
          <button
            key={t}
            type="button"
            role="tab"
            aria-selected={t === "Symbology"}
            className={t === "Symbology" ? "px-[5px] pb-1 text-left whitespace-nowrap" : "min-w-10 px-[5px] text-left whitespace-nowrap"}
          >
            {t}
          </button>
        ))}
      </div>
      <div className="mt-9 flex flex-1 pl-[10px]">
        <div className="flex w-[129px] shrink-0 flex-col">
          <p className="h-[15px] leading-[14px]">Show:</p>
          <div className="h-[203px] border border-[#868686] pt-px pl-[6px]">
            <ul className="text-[12px] leading-4 font-bold">
              <li>Features</li>
              <li>Categories</li>
              <li>Quantities</li>
              <li>Charts</li>
              <li>
                Multiple Attributes
                <ul className="flex items-center text-[11px] font-normal">
                  <li className="flex items-center pl-[6px] whitespace-nowrap">
                    <span className="mr-px mb-1 h-2 w-[9px] shrink-0 border-b border-l border-dotted border-[#777]" />
                    Quantity by category
                  </li>
                </ul>
              </li>
            </ul>
          </div>
          <PreviewMap />
        </div>
        <div className="ml-[2px] flex w-[428px] shrink-0 flex-col">
          <div className="flex items-start gap-[5px] pt-[6px] pl-[6px]">
            <h3 className="h-[21px] w-[356px] border-t border-l border-[#999] text-[12px] leading-[22px] font-bold">Draw quantities for each category.</h3>
            <PushButton className="h-[22px] w-[58px]">Import...</PushButton>
          </div>
          <div className="mt-2 flex gap-[3px] pl-[2px]">
            <Group title="Value Fields" className="h-[89px] w-[213px] px-[6px]">
              <div className="flex flex-col gap-[3px] pt-[2px]">
                <FieldSelect label="Value field 1" value="primary_fu" />
                <FieldSelect label="Value field 2" value="none" />
                <FieldSelect label="Value field 3" value="none" />
              </div>
            </Group>
            <div className="flex w-[210px] flex-col gap-[3px]">
              <Group title="Color Scheme" className="h-[44px] px-[5px]">
                <button type="button" aria-label="Color scheme" className="mt-[3px] flex h-[25px] w-full items-center justify-between rounded-xs border border-[#868686] pr-1 pl-[3px]">
                  <span className="flex h-4 w-[173px]">
                    {ramp.map((c, i) => (
                      <span key={i} className={i === 0 ? "w-[6px]" : i === ramp.length - 1 ? "flex-1" : "w-[10px]"} style={{ backgroundColor: c }} />
                    ))}
                  </span>
                  <Chevron />
                </button>
              </Group>
              <Group title="Variation by" className="h-[42px] px-[6px]">
                <div className="flex justify-between pt-[5px]">
                  <PushButton className="h-[19px] w-[88px]">Color Ramp...</PushButton>
                  <PushButton className="h-[19px] w-[88px]">Symbol Size...</PushButton>
                </div>
              </Group>
            </div>
          </div>
          <div className="mt-2 flex items-center gap-[10px]">
            <SymbolTable />
            <div className="flex flex-col gap-4">
              <button type="button" aria-label="Move up">
                <svg width="14" height="14" viewBox="0 0 14 14" className="block" aria-hidden="true">
                  <path d="M7 0l6.500 6.500H9V14H5V6.500H.5z" fill="#9e9e9e" />
                </svg>
              </button>
              <button type="button" aria-label="Move down">
                <svg width="14" height="14" viewBox="0 0 14 14" className="block" aria-hidden="true">
                  <path d="M7 14L.5 7.500H5V0h4v7.500h4.500z" fill="#9e9e9e" />
                </svg>
              </button>
            </div>
          </div>
          <div className="mt-[5px] flex gap-2 pl-px">
            <PushButton className="h-[22px] w-[82px]">Add All Values</PushButton>
            <PushButton className="h-[22px] w-[78px]">Add Values...</PushButton>
            <PushButton className="h-[22px] w-[74px]" disabled>Remove</PushButton>
            <PushButton className="h-[22px] w-[75px]">Remove All</PushButton>
            <PushButton className="h-[22px] w-[81px] gap-[9px] pl-3">
              <span>Adva<u>n</u>ced</span>
              <svg width="6" height="3" viewBox="0 0 6 3" aria-hidden="true">
                <path d="M0 0h6L3 3z" fill="#111" />
              </svg>
            </PushButton>
          </div>
        </div>
      </div>
      <footer className="flex justify-end gap-[7px] pr-[7px] pb-[7px]">
        <PushButton className="h-[22px] w-[74px]">OK</PushButton>
        <PushButton className="h-[22px] w-[74px]">Cancel</PushButton>
        <PushButton className="h-[22px] w-[74px]" disabled>Apply</PushButton>
      </footer>
    </section>
  );
}

/* ---------- application window ---------- */

export default function App() {
  return (
    <div className="relative flex h-screen overflow-hidden bg-[#505c6a] pt-[6px] font-['Open_Sans',sans-serif]">
      <div className="flex w-2 shrink-0 items-center justify-center gap-px pt-[230px]">
        <span className="h-px w-px bg-white" />
        <span className="h-px w-px bg-white" />
        <span className="h-px w-px bg-white" />
      </div>
      <div className="flex min-w-0 flex-1 flex-col overflow-hidden rounded-tl-lg border-t border-l border-[#808080] bg-[#fcfcfc]">
        <header className="flex h-[29px] shrink-0 items-center gap-[5px] pl-[7px]">
          <AppLogo />
          <h1 className="text-[11px] text-[#8a8a8a]">c3.assignment.demonstration - ArcMap</h1>
        </header>
        <nav className="flex h-7 shrink-0 items-center gap-[17px] pl-[11px] text-[11px] text-black">
          {menus.map((m) => (
            <button key={m} type="button">{m}</button>
          ))}
        </nav>
        <MainToolbar />
        <div className="flex min-h-0 flex-1">
          <TableOfContents />
          <LayoutView />
        </div>
      </div>
      <LayoutToolbar />
      <LayerProperties />
      <svg width="13" height="20" viewBox="0 0 13 20" className="pointer-events-none absolute top-[502px] left-[435px]" aria-hidden="true">
        <path d="M.5 .5v15.500l3.500-3.400 2.500 5.900 2.400-1-2.500-5.700h5z" fill="#fff" stroke="#111" />
      </svg>
    </div>
  );
}
